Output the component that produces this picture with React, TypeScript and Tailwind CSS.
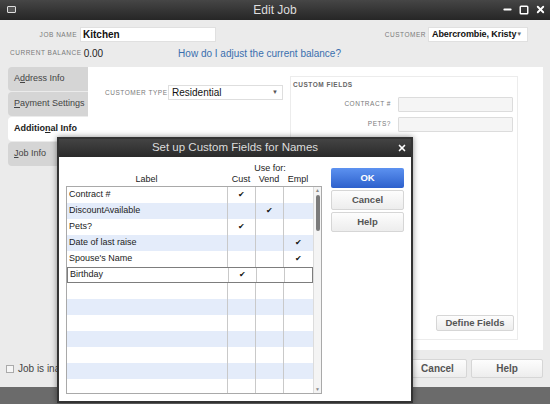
import { Minus, Square, X } from 'lucide-react';

const rows = [
  { label: 'Contract #', cust: true },
  { label: 'DiscountAvailable', vend: true },
  { label: 'Pets?', cust: true },
  { label: 'Date of last raise', empl: true },
  { label: "Spouse's Name", empl: true },
  { label: 'Birthday', cust: true, selected: true },
  { label: '' },
  { label: '' },
  { label: '' },
  { label: '' },
  { label: '' },
  { label: '' },
  { label: '' },
];

const tinyLabel = 'whitespace-nowrap text-[6.5px] uppercase tracking-[0.08em] text-[#7a7a7a]';
const greyBtn =
  'flex items-center justify-center rounded-[2px] border border-[#d6d6d6] bg-gradient-to-b from-[#fdfdfd] to-[#ededed] text-[9.5px] font-bold text-[#555]';

function Check({ on }: { on?: boolean }) {
  return (
    <div className="flex items-center justify-center border-l border-[#c9c9c9] text-[8px] leading-none text-[#111]">
      {on ? '✔' : ''}
    </div>
  );
}

function CustomFieldsDialog() {
  return (
    <div className="absolute left-[57px] top-[137px] flex h-[266px] w-[356px] flex-col border-2 border-[#333] bg-white shadow-[0_0_6px_rgba(0,0,0,0.45)]">
      {/* title bar */}
      <div className="relative flex h-[18px] items-center justify-center bg-gradient-to-b from-[#444] to-[#2a2a2a]">
        <span className="text-[11.5px] text-[#dcdcdc]">Set up Custom Fields for Names</span>
        <X className="absolute right-[4px] top-[4px] h-[10px] w-[10px] text-white" strokeWidth={4} />
      </div>

      <div className="flex pl-[7px]">
        {/* table */}
        <div className="flex w-[256px] flex-col">
          <div className="flex h-[29px] flex-col pt-[5px] text-[9px] text-[#222]">
            <div className="flex h-[12px]">
              <div className="w-[161px]" />
              <div className="w-[86px] text-center">Use for:</div>
            </div>
            <div className="flex h-[12px] items-center">
              <div className="w-[161px] text-center">Label</div>
              <div className="w-[28px] text-center">Cust</div>
              <div className="w-[28px] text-center">Vend</div>
              <div className="w-[30px] text-center">Empl</div>
            </div>
          </div>

          <div className="flex h-[208px] overflow-hidden border border-[#a9a9a9]">
            <div className="flex w-[246px] flex-col">
              {rows.map((r, i) => (
                <div
                  key={i}
                  className={`grid h-[16px] shrink-0 grid-cols-[160px_28px_28px_30px] text-[9px] text-[#222] ${
                    r.selected
                      ? 'border border-[#7d7d7d] bg-white'
                      : i % 2 === 1
                        ? 'bg-[#e4ecfa]'
                        : 'bg-white'
                  }`}
                >
                  <div className="flex items-center pl-[2px]">{r.label}</div>
                  <Check on={r.cust} />
                  <Check on={r.vend} />
                  <Check on={r.empl} />
                </div>
              ))}
            </div>
            {/* scrollbar */}
            <div className="relative flex w-[8px] flex-col items-center border-l border-[#dcdcdc] bg-[#f4f4f4]">
              <span className="mt-[1px] text-[5px] leading-none text-[#888]">▲</span>
              <div className="mt-[2px] h-[36px] w-[4px] rounded-[2px] bg-[#7b7b7b]" />
              <span className="mb-[1px] mt-auto text-[5px] leading-none text-[#888]">▼</span>
            </div>
          </div>
        </div>

        {/* buttons */}
        <div className="ml-[9px] flex w-[73px] flex-col gap-[2px] pt-[11px]">
          <div className="flex h-[20px] items-center justify-center rounded-[2px] bg-gradient-to-b from-[#5d92f0] to-[#2d60cc] text-[9.5px] font-bold text-white">
            OK
          </div>
          <div className={`h-[20px] ${greyBtn}`}>Cancel</div>
          <div className={`h-[20px] ${greyBtn}`}>Help</div>
        </div>
      </div>
    </div>
  );
}

function Tab({ children, active }: { children: React.ReactNode; active?: boolean }) {
  return (
    <div
      className={`flex h-[24px] items-center rounded-l-[4px] pl-[6px] text-[9px] ${
        active ? 'bg-white font-bold text-[#222]' : 'bg-[#d5d5d5] text-[#444]'
      }`}
    >
      {children}
    </div>
  );
}

export default function App() {
  return (
    <div className="relative h-[404px] w-[550px] overflow-hidden bg-[#6b6b6b] font-['Liberation_Sans',Arial,sans-serif]">
      <div className="flex h-[387px] flex-col bg-[#ebebeb]">
        {/* title bar */}
        <div className="relative flex h-[20px] shrink-0 items-center justify-center bg-gradient-to-b from-[#464646] to-[#262626]">
          <div className="absolute left-[7px] top-[6px] h-[7px] w-[9px] rounded-[1px] border-[1.5px] border-[#ddd] bg-[#555]" />
          <span className="text-[12px] text-[#dedede]">Edit Job</span>
          <div className="absolute right-[4px] top-[4px] flex items-center gap-[6px] text-white">
            <Minus className="h-[11px] w-[11px]" strokeWidth={4} />
            <Square className="h-[10px] w-[10px]" strokeWidth={3.5} />
            <X className="h-[11px] w-[11px]" strokeWidth={4} />
          </div>
        </div>

        {/* job name / customer */}
        <div className="mt-[7px] flex h-[15px] items-center">
          <div className={`w-[77px] text-right ${tinyLabel}`}>Job name</div>
          <div className="ml-[3px] flex h-[15px] w-[136px] items-center border border-[#e0e0e0] bg-white pl-[2px] text-[10px] font-bold text-[#111]">
            Kitchen
          </div>
          <div className={`ml-auto ${tinyLabel}`}>Customer</div>
          <div className="ml-[2px] mr-[22px] flex h-[15px] w-[100px] items-center whitespace-nowrap border border-[#e0e0e0] bg-white pl-[3px] pr-[5px] text-[9px] font-bold tracking-[-0.01em] text-[#111]">
            <span>Abercrombie, Kristy</span>
            <span className="ml-auto text-[6px] text-[#666]">▼</span>
          </div>
        </div>

        {/* current balance */}
        <div className="mt-[5px] flex h-[12px] items-center">
          <div className={`pl-[10px] ${tinyLabel}`}>Current balance</div>
          <span className="ml-[2px] text-[10px] text-[#222]">0.00</span>
          <span className="ml-[75px] text-[10px] text-[#3a6fae]">How do I adjust the current balance?</span>
        </div>

        {/* tabs + panel */}
        <div className="mt-[8px] flex pl-[8px]">
          <div className="flex w-[80px] flex-col gap-[1px]">
            <Tab>
              A<u>d</u>dress Info
            </Tab>
            <Tab>
              <u>P</u>ayment Settings
            </Tab>
            <Tab active>
              Additio<u>n</u>al Info
            </Tab>
            <Tab>
              <u>J</u>ob Info
            </Tab>
          </div>

          <div className="flex h-[283px] w-[455px] bg-white pt-[9px]">
            <div className="flex w-[202px] items-start pl-[17px] pt-[9px]">
              <div className="flex h-[15px] items-center">
                <div className={`w-[63px] ${tinyLabel}`}>Customer type</div>
                <div className="flex h-[15px] w-[115px] items-center border border-[#dedede] bg-white pl-[3px] pr-[4px] text-[10px] text-[#111]">
                  Residential
                  <span className="ml-auto text-[6px] text-[#555]">▼</span>
                </div>
              </div>
            </div>

            <div className="flex h-[264px] w-[228px] flex-col border border-[#ececec] pb-[8px]">
              <div className="mt-[3px] pl-[2px] text-[6.5px] font-bold uppercase tracking-[0.08em] text-[#666]">
                Custom fields
              </div>
              <div className="mt-[7px] flex h-[15px] items-center">
                <div className={`w-[100px] text-right ${tinyLabel}`}>Contract #</div>
                <div className="ml-[7px] h-[15px] w-[115px] rounded-[1px] border border-[#dcdcdc] bg-[#f5f5f5]" />
              </div>
              <div className="mt-[5px] flex h-[15px] items-center">
                <div className={`w-[100px] text-right ${tinyLabel}`}>Pets?</div>
                <div className="ml-[7px] h-[15px] w-[115px] rounded-[1px] border border-[#dcdcdc] bg-[#f5f5f5]" />
              </div>
              <div className={`ml-[145px] mt-auto h-[16px] w-[78px] ${greyBtn}`}>Define Fields</div>
            </div>
          </div>
        </div>

        {/* bottom bar */}
        <div className="mt-[9px] flex h-[19px] items-center">
          <div className="ml-[6px] h-[8px] w-[8px] border border-[#aaa] bg-[#f6f6f6]" />
          <span className="ml-[4px] text-[10px] text-[#444]">Job is inactive</span>
          <div className={`ml-auto h-[19px] w-[59px] ${greyBtn} text-[10px]`}>Cancel</div>
          <div className={`ml-[4px] mr-[7px] h-[19px] w-[72px] ${greyBtn} text-[10px]`}>Help</div>
        </div>
      </div>

      <CustomFieldsDialog />
    </div>
  );
}
